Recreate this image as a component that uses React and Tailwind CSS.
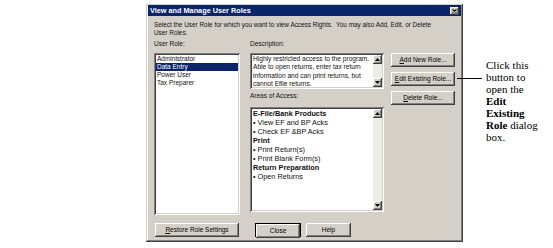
const raised =
  "shadow-[inset_-1px_-1px_0_#404040,inset_1px_1px_0_#ffffff,inset_-2px_-2px_0_#808080]";
const sunken =
  "shadow-[inset_1px_1px_0_#808080,inset_-1px_-1px_0_#ffffff,inset_2px_2px_0_#404040,inset_-2px_-2px_0_#d4d0c8]";

function Arrow({ up }) {
  return (
    <div className={`w-[9px] h-[9px] bg-[#d4d0c8] ${raised} flex items-center justify-center`}>
      <svg width="5" height="3" viewBox="0 0 5 3">
        {up ? <polygon points="2.5,0 5,3 0,3" fill="#000" /> : <polygon points="0,0 5,0 2.5,3" fill="#000" />}
      </svg>
    </div>
  );
}

function ScrollBar() {
  return (
    <div className="w-[9px] h-full shrink-0 flex flex-col justify-between bg-[#eeece6]">
      <Arrow up />
      <Arrow />
    </div>
  );
}

function Btn({ children, className = "" }) {
  return (
    <div
      className={`h-[14px] bg-[#d4d0c8] ${raised} flex items-center justify-center text-[6.5px] leading-[8px] text-black whitespace-nowrap ${className}`}
    >
      {children}
    </div>
  );
}

export default function App() {
  return (
    <div className="relative w-[553px] h-[248px] bg-white flex font-['Liberation_Sans',Arial,sans-serif] overflow-hidden">
      <div className="ml-[146px] mt-[4px] w-[317px] h-[238px] shrink-0 bg-[#d4d0c8] flex flex-col px-[2px] pt-[1px] shadow-[inset_-1px_-1px_0_#404040,inset_1px_1px_0_#d4d0c8,inset_-2px_-2px_0_#808080,inset_2px_2px_0_#ffffff]">
        <div className="h-[11px] bg-[#0a246a] flex items-center justify-between pl-[2px] pr-[2px]">
          <span className="text-white font-bold text-[7.3px] leading-[9px] whitespace-nowrap">View and Manage User Roles</span>
          <div className={`w-[9px] h-[8px] bg-[#d4d0c8] ${raised} flex items-center justify-center`}>
            <svg width="5" height="4" viewBox="0 0 5 4">
              <path d="M0.5 0.5 L4.5 3.5 M4.5 0.5 L0.5 3.5" stroke="#000" strokeWidth="1.1" />
            </svg>
          </div>
        </div>
        <div className="flex-1 flex flex-col px-[6px] text-[#111]">
          <div className="mt-[5px] text-[6.4px] leading-[8px] whitespace-nowrap">
            Select the User Role for which you want to view Access Rights.&nbsp; You may also Add, Edit, or Delete
            <br />
            User Roles.
          </div>
          <div className="flex mt-[2px]">
            <div className="w-[86px] shrink-0 flex flex-col">
              <div className="h-[8px] mt-[1px] text-[6.5px] leading-[8px]">User Role:</div>
              <div className={`mt-[5px] h-[162px] bg-white ${sunken} p-[2px] text-[6.5px] leading-[8px] whitespace-nowrap`}>
                <div className="h-[8px] px-[1px]">Administrator</div>
                <div className="h-[8px] px-[1px] bg-[#0a246a] text-white">Data Entry</div>
                <div className="h-[8px] px-[1px]">Power User</div>
                <div className="h-[8px] px-[1px]">Tax Preparer</div>
              </div>
            </div>
            <div className="w-[134px] shrink-0 ml-[10px] flex flex-col">
              <div className="h-[8px] mt-[1px] text-[6.5px] leading-[8px] whitespace-nowrap">Description:</div>
              <div className={`mt-[5px] h-[36px] bg-white ${sunken} p-[2px] flex`}>
                <div className="flex-1 pl-[1px] text-[6.6px] leading-[8.3px] whitespace-nowrap overflow-hidden">
                  Highly restricted access to the program.
                  <br />
                  Able to open returns, enter tax return
                  <br />
                  information and can print returns, but
                  <br />
                  cannot Efile returns.
                </div>
                <ScrollBar />
              </div>
              <div className="h-[8px] mt-[3px] text-[6.5px] leading-[8px] whitespace-nowrap">Areas of Access:</div>
              <div className={`mt-[7px] h-[105px] bg-white ${sunken} p-[2px] flex`}>
                <div className="flex-1 pl-[1px] text-[7.3px] leading-[9px] whitespace-nowrap overflow-hidden">
                  <div className="font-bold">E-File/Bank Products</div>
                  <div>• View EF and BP Acks</div>
                  <div>• Check EF &amp;BP Acks</div>
                  <div className="font-bold">Print</div>
                  <div>• Print Return(s)</div>
                  <div>• Print Blank Form(s)</div>
                  <div className="font-bold">Return Preparation</div>
                  <div>• Open Returns</div>
                </div>
                <ScrollBar />
              </div>
            </div>
            <div className="w-[64px] shrink-0 ml-[7px] flex flex-col gap-[5px] pt-[14px]">
              <Btn>
                <span><u>A</u>dd New Role...</span>
              </Btn>
              <Btn>
                <span><u>E</u>dit Existing Role...</span>
              </Btn>
              <Btn>
                <span><u>D</u>elete Role...</span>
              </Btn>
            </div>
          </div>
          <div className="flex mt-[8px]">
            <Btn className="ml-[1px] w-[84px]">
              <span><u>R</u>estore Role Settings</span>
            </Btn>
            <div className="ml-[16px] w-[46px] h-[14px] border border-black">
              <Btn className="h-[12px]">Close</Btn>
            </div>
            <Btn className="ml-[5px] w-[45px]">Help</Btn>
          </div>
        </div>
      </div>
      <div className="absolute left-[457px] top-[78px] w-[25px] h-[1px] bg-black" />
      <div className="ml-[23px] mt-[59px] font-['Liberation_Serif','Times_New_Roman',serif] text-[11px] leading-[12px] text-black whitespace-nowrap">
        Click this
        <br />
        button to
        <br />
        open the
        <br />
        <b>Edit</b>
        <br />
        <b>Existing</b>
        <br />
        <b>Role</b> dialog
        <br />
        box.
      </div>
    </div>
  );
}
